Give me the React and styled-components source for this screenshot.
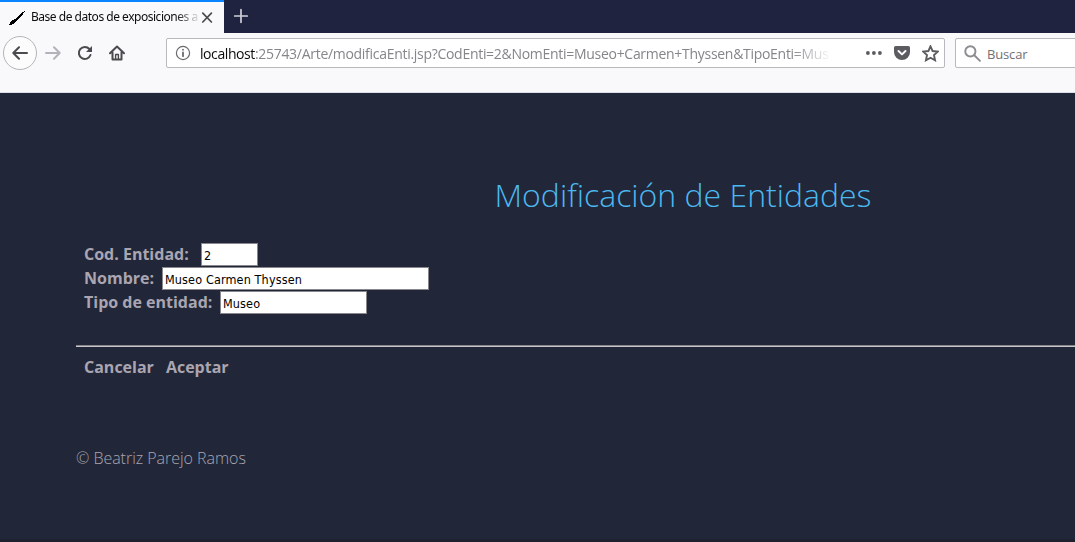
import React from 'react';
import styled, { createGlobalStyle } from 'styled-components';

const GlobalStyle = createGlobalStyle`
  * { box-sizing: border-box; }
  body { margin: 0; background: #212738; overflow: hidden; }
`;

const Window = styled.div`
  display: flex;
  flex-direction: column;
  height: 542px;
  overflow: hidden;
  background: #212738;
  font-family: 'Open Sans', sans-serif;
`;

const TabStrip = styled.div`
  display: flex;
  flex: none;
  height: 33px;
  background: #202340;
`;

const Tab = styled.div`
  display: flex;
  align-items: center;
  width: 224px;
  padding: 0 9px 0 8px;
  border-top: 2px solid #0a84ff;
  background: #f9f9fb;
`;

const TabTitle = styled.span`
  width: 168px;
  margin: 0 0 1px 5px;
  white-space: nowrap;
  font: 12px/18px 'Noto Sans', sans-serif;
  letter-spacing: -0.48px;
  color: #0c0c0d;
  mask-image: linear-gradient(to right, #000 145px, transparent 170px);
`;

const NewTab = styled.div`
  display: flex;
  padding: 8px 0 0 9px;
`;

const Toolbar = styled.div`
  display: flex;
  flex: none;
  align-items: flex-start;
  height: 60px;
  padding: 3px 0 0 3px;
  background: #f9f9fb;
  border-bottom: 1px solid #dcdfe8;
`;

const BackButton = styled.div`
  display: flex;
  flex: none;
  align-items: center;
  justify-content: center;
  width: 34px;
  height: 34px;
  border: 1px solid #b5b5b9;
  border-radius: 50%;
  background: #fcfcfd;
`;

const ToolButton = styled.div`
  display: flex;
  flex: none;
  align-items: center;
  justify-content: center;
  width: 32px;
  height: 34px;
`;

const Field = styled.div`
  display: flex;
  flex: none;
  align-items: center;
  height: 30px;
  margin-top: 2px;
  border: 1px solid #b9b9bb;
  border-radius: 2px;
  background: #fff;
`;

const AddressField = styled(Field)`
  width: 779px;
  margin-left: 33px;
  padding-left: 8px;
`;

const SearchField = styled(Field)`
  width: 140px;
  margin-left: 10px;
  padding-left: 8px;
`;

const Url = styled.span`
  flex: none;
  width: 632px;
  margin-left: 9px;
  padding-top: 2px;
  white-space: nowrap;
  font: 14px/20px 'Open Sans', sans-serif;
  letter-spacing: ${(p) => p.$spacing}px;
  color: #85858a;
  mask-image: linear-gradient(to right, #000 592px, transparent 632px);
`;

const Host = styled.span`
  color: #0c0c0d;
  letter-spacing: -0.42px;
`;

const FieldIcons = styled.div`
  display: flex;
  align-items: center;
  gap: 12px;
  margin-left: 34px;
`;

const SearchHint = styled.span`
  margin-left: 6px;
  padding-top: 2px;
  font: 13px/20px 'Open Sans', sans-serif;
  letter-spacing: -0.15px;
  color: #707075;
`;

const Page = styled.main`
  display: flex;
  flex: 1;
  flex-direction: column;
  padding-left: 76px;
  border-bottom: 3px solid #1e2130;
  color: #aaa5b1;
`;

const Title = styled.h1`
  width: 1214px;
  margin: 80px 0 0;
  text-align: center;
  font: 300 32px/44px 'Open Sans', sans-serif;
  letter-spacing: 0;
  color: #4cb8f0;
`;

const Form = styled.div`
  display: flex;
  flex-direction: column;
  margin-top: 25px;
  padding-left: 8px;
`;

const Row = styled.div`
  display: flex;
  height: 24px;
`;

const Label = styled.label`
  width: ${(p) => p.$width}px;
  white-space: nowrap;
  font: 700 16px/24px 'Open Sans', sans-serif;
`;

const Input = styled.input`
  width: ${(p) => p.$width}px;
  height: 23px;
  margin-top: 1px;
  padding: 2px 2px 0;
  border: 1px solid #88888c;
  border-radius: 0;
  outline: 0;
  background: #fff;
  color: #000;
  font: 12.5px 'DejaVu Sans Condensed', 'DejaVu Sans', sans-serif;
  letter-spacing: ${(p) => p.$spacing || 0}px;
`;

const Divider = styled.hr`
  width: 100%;
  height: 2px;
  margin: 31px 0 0;
  border: 0;
  border-top: 1px solid #85858a;
  background: #c6c6ca;
`;

const Actions = styled.nav`
  display: flex;
  gap: 12px;
  margin-top: 8px;
  padding-left: 8px;
`;

const Action = styled.a`
  font: 700 16px/24px 'Open Sans', sans-serif;
`;

const Footer = styled.footer`
  margin-top: 67px;
  font: 300 16px/24px 'Open Sans', sans-serif;
  letter-spacing: ${(p) => p.$spacing}px;
`;

const Icon = ({ size = 16, color = '#4a4a4f', width = 2, children, ...rest }) => (
  <svg width={size} height={size} viewBox="0 0 16 16" fill="none" stroke={color}
    strokeWidth={width} strokeLinecap="round" strokeLinejoin="round" {...rest}>
    {children}
  </svg>
);

const fields = [
  { label: 'Cod. Entidad:', value: '2', labelWidth: 117, width: 57 },
  { label: 'Nombre:', value: 'Museo Carmen Thyssen', labelWidth: 78, width: 267 },
  { label: 'Tipo de entidad:', value: 'Museo', labelWidth: 136, width: 147 },
];

export default function App() {
  return (
    <Window>
      <GlobalStyle />
      <TabStrip>
        <Tab>
          <svg width="18" height="16" viewBox="0 0 18 16" shapeRendering="crispEdges">
            <path d="M17 1 13 3 7 9 4 10 1 15 6 14 8 11 13 7Z" fill="#000" />
          </svg>
          <TabTitle>Base de datos de exposiciones a</TabTitle>
          <Icon size={16} width={1.7}><path d="m3.8 3.2 8.6 8.8m0-8.8-8.6 8.8" /></Icon>
        </Tab>
        <NewTab>
          <Icon color="#cfcfd8" width={1.7}><path d="M8 1.7v12.6M1.7 8h12.6" /></Icon>
        </NewTab>
      </TabStrip>
      <Toolbar>
        <BackButton>
          <Icon><path d="M15 8H1.5M7 2.3 1.3 8 7 13.7" /></Icon>
        </BackButton>
        <ToolButton>
          <Icon color="#b4b4b8"><path d="M1 8h13.5M9 2.3 14.7 8 9 13.7" /></Icon>
        </ToolButton>
        <ToolButton>
          <Icon>
            <path d="M12.4 4A6 6 0 1 0 13.5 10" />
            <path d="M15 1v6H9z" fill="#4a4a4f" stroke="none" />
          </Icon>
        </ToolButton>
        <ToolButton>
          <Icon>
            <path d="M1 8.2 8 1.5l7 6.7M3.5 7.5v7h9v-7" />
            <path d="M6.6 14V9.5h2.8V14" strokeWidth="1.4" />
          </Icon>
        </ToolButton>
        <AddressField>
          <Icon color="#6b6b6f" width={1.2}>
            <circle cx="8" cy="8" r="6.6" />
            <path d="M8 7.4v3.8M8 4.7v.1" strokeWidth="1.8" />
          </Icon>
          <Url $spacing={-0.29}>
            <Host>localhost</Host>:25743/Arte/modificaEnti.jsp?CodEnti=2&amp;NomEnti=Museo+Carmen+Thyssen&amp;TipoEnti=Mus
          </Url>
          <FieldIcons>
            <Icon width={0}>
              <g fill="#5c5c60"><circle cx="1.9" cy="8" r="1.9" /><circle cx="7.9" cy="8" r="1.9" /><circle cx="13.9" cy="8" r="1.9" /></g>
            </Icon>
            <Icon width={0}>
              <path d="M1.6 1h12.8Q16 1 16 2.6V7A8 8 0 0 1 0 7V2.6Q0 1 1.6 1Z" fill="#5c5c60" />
              <path d="m4.5 6 3.5 3.4L11.5 6" stroke="#fff" strokeWidth="2" />
            </Icon>
            <Icon color="#5c5c60" width={1.8} size={17}>
              <path d="m8 1.2 2 4.5 4.9.5-3.6 3.3 1 4.9L8 12l-4.3 2.4 1-4.9L1.1 6.2 6 5.7Z" strokeLinejoin="miter" />
            </Icon>
          </FieldIcons>
        </AddressField>
        <SearchField>
          <Icon size={17} color="#8c8c90" width={1.8}>
            <circle cx="6" cy="6" r="4.8" /><path d="m9.7 9.7 5.3 5.2" />
          </Icon>
          <SearchHint>Buscar</SearchHint>
        </SearchField>
      </Toolbar>
      <Page>
        <Title>Modificación de Entidades</Title>
        <Form>
          {fields.map((f) => (
            <Row key={f.label}>
              <Label $width={f.labelWidth}>{f.label}</Label>
              <Input $width={f.width} $spacing={0.14} defaultValue={f.value} aria-label={f.label} />
            </Row>
          ))}
        </Form>
        <Divider />
        <Actions>
          <Action>Cancelar</Action>
          <Action>Aceptar</Action>
        </Actions>
        <Footer $spacing={-0.03}>© Beatriz Parejo Ramos</Footer>
      </Page>
    </Window>
  );
}
